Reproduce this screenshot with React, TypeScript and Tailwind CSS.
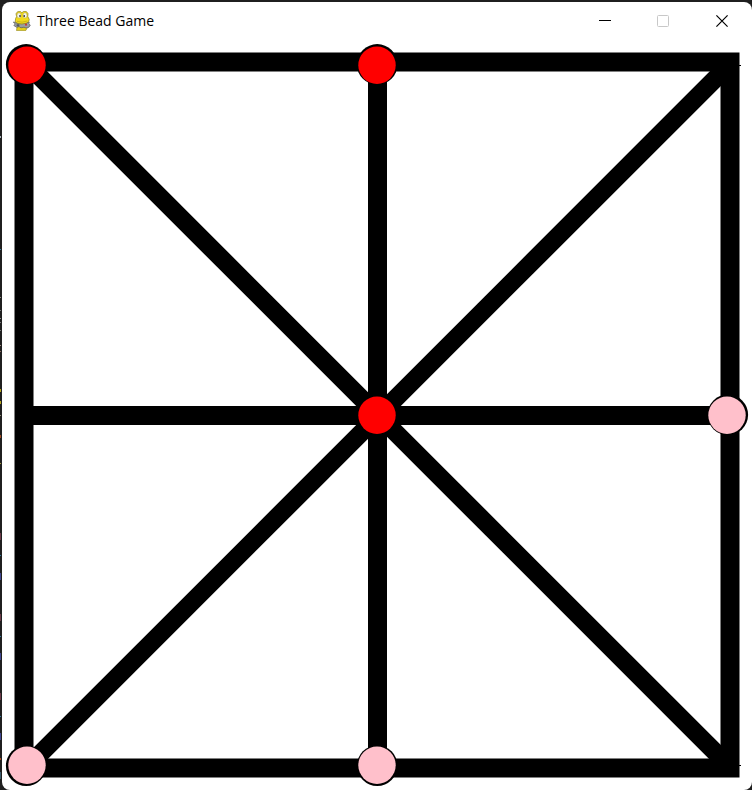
import React from "react";

type Player = "red" | "pink";
type Point = { x: number; y: number };

const FILL: Record<Player, string> = { red: "#ff0000", pink: "#ffc0cb" };

const beads: (Point & { player: Player; ringX: number; ringY: number })[] = [
  { x: 27, y: 65, ringX: 26.2, ringY: 64.4, player: "red" },
  { x: 377, y: 65, ringX: 377.2, ringY: 64.4, player: "red" },
  { x: 377, y: 415, ringX: 377.2, ringY: 415, player: "red" },
  { x: 727, y: 415, ringX: 727.8, ringY: 414.8, player: "pink" },
  { x: 27, y: 765, ringX: 26.2, ringY: 765.7, player: "pink" },
  { x: 377, y: 765, ringX: 377.2, ringY: 765.7, player: "pink" },
];

const specks: { y: number; h: number; color: string }[] = [
  { y: 136, h: 2, color: "#a9b4bc" },
  { y: 249, h: 1, color: "#3f7f9f" },
  { y: 297, h: 1, color: "#8a8a80" },
  { y: 310, h: 1, color: "#777777" },
  { y: 318, h: 1, color: "#8a8a8a" },
  { y: 322, h: 1, color: "#777777" },
  { y: 330, h: 1, color: "#777777" },
  { y: 345, h: 1, color: "#a08a80" },
  { y: 351, h: 1, color: "#8a6a60" },
  { y: 389, h: 3, color: "#b5a51c" },
  { y: 401, h: 3, color: "#b5a51c" },
  { y: 415, h: 1, color: "#8f8a75" },
  { y: 435, h: 3, color: "#a04a22" },
  { y: 463, h: 1, color: "#a59a3c" },
  { y: 533, h: 7, color: "#6b3a48" },
  { y: 555, h: 1, color: "#2f7aa0" },
  { y: 573, h: 7, color: "#3f4590" },
  { y: 614, h: 7, color: "#6b3a48" },
  { y: 636, h: 1, color: "#2f7aa0" },
  { y: 653, h: 7, color: "#3f4590" },
  { y: 693, h: 7, color: "#6b3a48" },
  { y: 716, h: 1, color: "#2f7aa0" },
  { y: 733, h: 7, color: "#3f4590" },
  { y: 758, h: 2, color: "#a04a22" },
  { y: 772, h: 7, color: "#3a5a6c" },
];

function SnakeIcon() {
  return (
    <svg className="h-5 w-5" viewBox="0 0 20 20" aria-hidden="true">
      <path d="M4.500 19.600 L5 16 L8 14 L13 14 L15 17.500 L13.500 19.800 Z" fill="#e6cf17" stroke="#8a801f" strokeWidth="0.6" />
      <path d="M1.300 11 L3.200 13 L1.800 14.500 L4.500 16.200 L7 15.600 L9 16.800 L12 16.200 L14 17 L17 16.200 L18.300 14 L16.800 12.600 L17.300 11.200 L14 12 L7 12.500 Z" fill="#9a9da0" stroke="#56595c" strokeWidth="0.7" />
      <path d="M3.600 7.500 L4.600 5.500 L4 2.800 L5.600 0.700 L8.400 0.500 L9.800 1.800 L11.500 0.500 L14.400 0.600 L16 2.600 L15.800 5.600 L17.200 8.300 L16.800 10.600 L14.200 12.300 L10 13 L6 12.600 L3.200 10.800 Z" fill="#f1da1d" stroke="#8a801f" strokeWidth="0.7" />
      <ellipse cx="7" cy="4.400" rx="2" ry="2.600" fill="#f4f4ee" stroke="#a39a45" strokeWidth="0.4" />
      <ellipse cx="13" cy="4.400" rx="2" ry="2.600" fill="#f4f4ee" stroke="#a39a45" strokeWidth="0.4" />
      <circle cx="8" cy="5" r="0.900" fill="#3a3a3a" />
      <circle cx="12.200" cy="5" r="0.900" fill="#3a3a3a" />
      <path d="M5 10.300 Q10 12.200 15.300 10" fill="none" stroke="#bfa814" strokeWidth="0.700" />
      <circle cx="14" cy="13.700" r="1.100" fill="#c23b3b" />
      <path d="M4.500 14.200H7.500M6 12.900V15.500" stroke="#3f4245" strokeWidth="0.800" />
    </svg>
  );
}

function TitleBar() {
  return (
    <header className="flex h-[38px] items-center pl-[10px]">
      <SnakeIcon />
      <h1 className="ml-[5px] flex-1 font-['Open_Sans','Noto_Sans',sans-serif] text-sm leading-5 text-black">
        Three Bead Game
      </h1>
      <button type="button" aria-label="Minimize" className="flex h-full w-[58px] items-center justify-center">
        <svg className="h-3 w-3" viewBox="0 0 12 12">
          <path d="M0 5.500H12" stroke="#000" strokeWidth="1" />
        </svg>
      </button>
      <button type="button" aria-label="Maximize" disabled className="flex h-full w-[58px] items-center justify-center">
        <svg className="h-3 w-3" viewBox="0 0 12 12">
          <rect x="0.500" y="0.500" width="11" height="11" rx="1" fill="none" stroke="#c8c8c8" />
        </svg>
      </button>
      <button type="button" aria-label="Close" className="flex h-full w-[60px] items-center justify-center">
        <svg className="h-3 w-3" viewBox="0 0 12 12">
          <path d="M0.400 0.400L11.600 11.600M11.600 0.400L0.400 11.600" stroke="#000" strokeWidth="1.200" />
        </svg>
      </button>
    </header>
  );
}

function Board() {
  return (
    <svg className="block w-full" viewBox="2 40 750 750" role="img" aria-label="Three bead board">
      <g fill="none" stroke="#000">
        <path d="M24 62H730V768H24Z" strokeWidth="19" />
        <path d="M24 415.500H730M377.500 62V768" strokeWidth="19" />
        <path d="M27 64L727 764M727 67L27 767" strokeWidth="18.200" />
        <path d="M739 65.500H741M739 765.500H741" strokeWidth="1" />
      </g>
      {beads.map((b) => (
        <g key={`${b.x}-${b.y}`}>
          <circle cx={b.ringX} cy={b.ringY} r="20.300" fill="#000" />
          <circle cx={b.x} cy={b.y + 0.2} r="18.700" fill={FILL[b.player]} />
        </g>
      ))}
    </svg>
  );
}

export default function App() {
  return (
    <div className="relative bg-[#1f1f1f] pt-[2px] pl-[2px]">
      {specks.map((s) => (
        <span
          key={s.y}
          className="absolute left-0 w-px"
          style={{ top: s.y, height: s.h, backgroundColor: s.color }}
        />
      ))}
      <main className="overflow-hidden rounded-lg bg-white">
        <TitleBar />
        <Board />
      </main>
    </div>
  );
}
